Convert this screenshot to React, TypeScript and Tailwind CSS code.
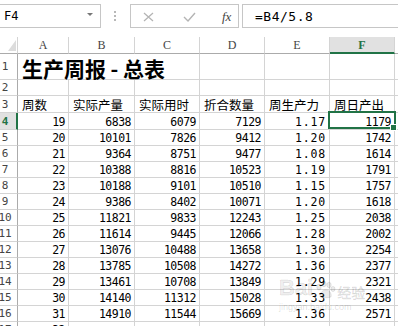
import { clsx } from "clsx";

const cols = "grid grid-cols-[18px_51px_66px_65px_65px_65px_65px_1fr]";
const mono = "font-['DejaVu_Sans_Mono',monospace]";
const cjk = "font-['Noto_Sans_CJK_SC',sans-serif]";

const data = [
    ["4", "19", "6838", "6079", "7129", "1.17", "1179"],
    ["5", "20", "10101", "7826", "9412", "1.20", "1742"],
    ["6", "21", "9364", "8751", "9477", "1.08", "1614"],
    ["7", "22", "10388", "8816", "10523", "1.19", "1791"],
    ["8", "23", "10188", "9101", "10510", "1.15", "1757"],
    ["9", "24", "9386", "8402", "10071", "1.20", "1618"],
    ["10", "25", "11821", "9833", "12243", "1.25", "2038"],
    ["11", "26", "11614", "9445", "12066", "1.28", "2002"],
    ["12", "27", "13076", "10488", "13658", "1.30", "2254"],
    ["13", "28", "13785", "10508", "14272", "1.36", "2377"],
    ["14", "29", "13461", "10708", "13849", "1.29", "2321"],
    ["15", "30", "14140", "11312", "15028", "1.33", "2438"],
    ["16", "31", "14910", "11544", "15669", "1.36", "2571"],
    ["17", "32", "", "", "", "", ""],
];

const heads = ["周数", "实际产量", "实际用时", "折合数量", "周生产力", "周日产出"];

function RowHead({ n, active }: { n: string; active?: boolean }) {
    return (
        <div className={clsx("relative flex items-center border-b border-[#d4d4d4]", active ? "bg-[#e1e1e1] border-r-2 border-r-[#217346]" : "border-r border-r-[#ababab]")}>
            <div className={clsx("w-[10px] flex justify-center text-[11px] leading-none", mono, active ? "font-bold text-[#217346]" : "text-[#444]")}>{n}</div>
        </div>
    );
}

function Num({ v, className, children }: { v: string; className?: string; children?: React.ReactNode }) {
    return (
        <div className={clsx("relative flex items-end justify-end pr-[3px] pb-[1px] border-r border-b border-[#d4d4d4] text-[11.5px] leading-none tracking-[-0.5px] whitespace-nowrap", mono, className)}>
            {v}
            {children}
        </div>
    );
}

export default function App() {
    return (
        <div className="relative w-[398px] h-[326px] overflow-hidden bg-white text-black">
            {/* formula bar */}
            <div className="h-[37px] flex items-start pt-[4px]">
                <div className="-ml-px w-[102px] h-[24px] border border-[#c6c6c6] flex items-center justify-between pl-[4px] pr-[7px]">
                    <span className={clsx("text-[12px] leading-none", mono)}>F4</span>
                    <span className="w-0 h-0 border-l-[3px] border-r-[3px] border-t-[3px] border-l-transparent border-r-transparent border-t-[#777] mb-[3px]" />
                </div>
                <div className="ml-[13px] h-[24px] flex flex-col justify-center gap-[2px]">
                    <span className="w-[2px] h-[2px] bg-[#b8b8b8]" />
                    <span className="w-[2px] h-[2px] bg-[#b8b8b8]" />
                    <span className="w-[2px] h-[2px] bg-[#b8b8b8]" />
                </div>
                <div className="ml-[14px] w-[109px] h-[24px] border border-[#c6c6c6] flex items-center pl-[12px]">
                    <svg width="11" height="10" viewBox="0 0 11 10" className="mt-px">
                        <path d="M1 1 L10 9 M10 1 L1 9" stroke="#b4b4b4" strokeWidth="1.3" fill="none" />
                    </svg>
                    <svg width="13" height="10" viewBox="0 0 13 10" className="ml-[29px] mt-px">
                        <path d="M1 5 L5 9 L12 1" stroke="#b4b4b4" strokeWidth="1.4" fill="none" />
                    </svg>
                    <span className="ml-[26px] italic text-[13px] leading-none text-[#444] font-['Liberation_Serif',serif]">fx</span>
                </div>
                <div className="ml-[3px] flex-1 -mr-[2px] h-[24px] border border-[#c6c6c6] flex items-center pl-[12px]">
                    <span className={clsx("text-[13px] leading-none tracking-[0.5px]", mono)}>=B4/5.8</span>
                </div>
            </div>

            {/* column headers */}
            <div className={clsx(cols, "h-[17px]")}>
                <div className="flex items-end justify-end pr-[1px] pb-[2px] border-r border-b border-r-[#d4d4d4] border-b-[#ababab]">
                    <svg width="8" height="11" viewBox="0 0 8 11">
                        <path d="M8 0 L8 11 L0 11 Z" fill="#dcdcdc" />
                    </svg>
                </div>
                {["A", "B", "C", "D", "E"].map((c) => (
                    <div key={c} className="flex items-center justify-center border-r border-b border-r-[#d4d4d4] border-b-[#ababab] text-[12px] leading-none text-[#444] font-['Liberation_Serif',serif]">{c}</div>
                ))}
                <div className="flex items-center justify-center bg-[#e1e1e1] border-r border-r-[#d4d4d4] border-b-2 border-b-[#217346] text-[12px] leading-none font-bold text-[#217346] font-['Liberation_Serif',serif]">F</div>
                <div className="border-b border-b-[#ababab]" />
            </div>

            {/* row 1 */}
            <div className={clsx(cols, "h-[26px]")}>
                <RowHead n="1" />
                <div className="relative z-10 flex items-end pl-[4px] border-b border-[#d4d4d4]">
                    <span className={clsx("text-[21px] font-bold leading-none whitespace-nowrap", cjk)}>
                        生产周报<span className="inline-block w-[17px] text-center">-</span>总表
                    </span>
                </div>
                <div className="border-b border-[#d4d4d4]" />
                {[0, 1, 2, 3].map((i) => (
                    <div key={i} className="border-r border-b border-[#d4d4d4]" />
                ))}
                <div className="border-b border-[#d4d4d4]" />
            </div>

            {/* row 2 */}
            <div className={clsx(cols, "h-[16px]")}>
                <RowHead n="2" />
                {[0, 1, 2, 3, 4, 5].map((i) => (
                    <div key={i} className="border-r border-b border-[#d4d4d4]" />
                ))}
                <div className="border-b border-[#d4d4d4]" />
            </div>

            {/* row 3 */}
            <div className={clsx(cols, "h-[17px]")}>
                <RowHead n="3" />
                {heads.map((h) => (
                    <div key={h} className={clsx("flex items-end pl-[4px] pb-[1px] border-r border-b border-[#d4d4d4] text-[12.5px] leading-none whitespace-nowrap", cjk)}>{h}</div>
                ))}
                <div className="border-b border-[#d4d4d4]" />
            </div>

            {/* data rows */}
            {data.map((r, idx) => (
                <div key={r[0]} className={clsx(cols, idx === 0 ? "h-[17px]" : "h-[16px]")}>
                    <RowHead n={r[0]} active={idx === 0} />
                    <Num v={r[1]} />
                    <Num v={r[2]} />
                    <Num v={r[3]} />
                    <Num v={r[4]} />
                    <Num v={r[5]} className="tracking-[0.8px] pr-[2px]" />
                    <Num v={r[6]} className={idx === 0 ? "z-10" : ""}>
                        {idx === 0 && (
                            <>
                                <span className="absolute -left-[2px] -top-[2px] -right-[2px] bottom-0 border-2 border-[#217346] pointer-events-none" />
                                <span className="absolute -right-[3px] -bottom-[2px] w-[7px] h-[7px] bg-[#217346] border border-white" />
                            </>
                        )}
                    </Num>
                    <div className="border-b border-[#d4d4d4]" />
                </div>
            ))}

            {/* watermark */}
            <div className="absolute left-[279px] top-[277px] pointer-events-none select-none">
                <div className="flex items-end">
                    <span className="text-[22px] font-bold leading-none text-black/[0.08] font-['Liberation_Sans',sans-serif] [-webkit-text-stroke:0.6px_rgba(0,0,0,0.15)]">Bai</span>
                    <svg width="22" height="18" viewBox="0 0 22 18" className="mx-[1px]">
                        <g fill="rgba(0,0,0,0.08)" stroke="rgba(0,0,0,0.15)" strokeWidth="0.6">
                            <ellipse cx="5" cy="6" rx="2.2" ry="3" />
                            <ellipse cx="10" cy="3" rx="2.2" ry="2.8" />
                            <ellipse cx="15" cy="4" rx="2.2" ry="2.8" />
                            <ellipse cx="19" cy="8" rx="2" ry="2.6" />
                            <path d="M6 16 C6 11 9 9 12 9 C15 9 18 12 17 16 C15 17 9 17 6 16 Z" />
                        </g>
                    </svg>
                    <span className={clsx("text-[14px] leading-none text-black/[0.08] [-webkit-text-stroke:0.5px_rgba(0,0,0,0.15)]", cjk)}>经验</span>
                </div>
                <div className="mt-[4px] text-[9px] leading-none text-black/[0.14] font-['Liberation_Sans',sans-serif]">jingyan.baidu.com</div>
            </div>
        </div>
    );
}
